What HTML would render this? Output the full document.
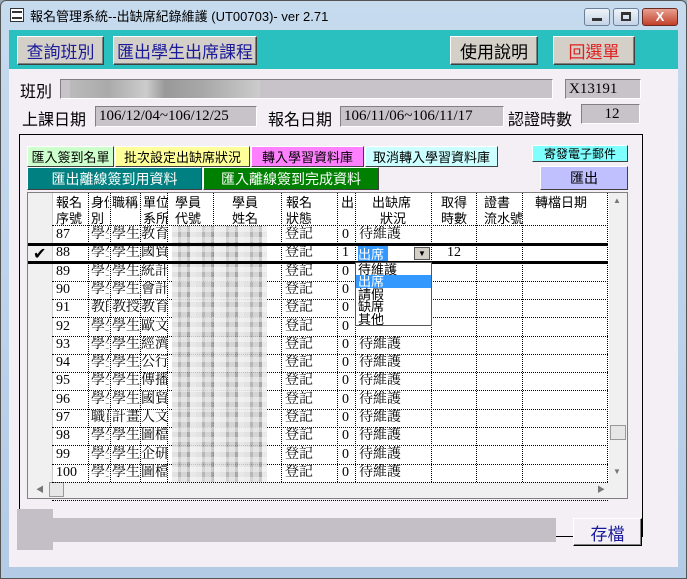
<!DOCTYPE html>
<html><head><meta charset="utf-8">
<style>
*{margin:0;padding:0;box-sizing:border-box}
body{width:687px;height:579px;overflow:hidden;background:#9ab;font-family:"Liberation Sans","Noto Sans CJK TC",sans-serif;position:relative}
.a{position:absolute}
.btn{position:absolute;background:#d4d0c8;border:1px solid;border-color:#fff #404040 #404040 #fff;box-shadow:inset -1px -1px 0 #808080;display:flex;align-items:center;justify-content:center;font-size:17px;font-family:"Noto Sans CJK TC",sans-serif;white-space:nowrap}
.box{position:absolute;background:#c8c3c8;border:1px solid;border-color:#808080 #fff #fff #808080;font-family:"Liberation Serif","Noto Serif CJK SC",serif;font-size:15px;display:flex;align-items:center;padding-left:3px;white-space:nowrap}
.lb{position:absolute;font-size:16px;font-family:"Noto Sans CJK TC",sans-serif;white-space:nowrap}
.sb{position:absolute;border:1px solid;border-color:#fff #404040 #404040 #fff;font-size:13px;display:flex;align-items:center;justify-content:center;font-family:"Noto Sans CJK TC",sans-serif;white-space:nowrap;overflow:hidden}
.cell{position:absolute;font-size:14px;font-family:"Liberation Serif","Noto Serif CJK SC",serif;white-space:nowrap;overflow:hidden;line-height:18px}
.vl{position:absolute;border-left:1px dotted #000;width:0}
.hl{position:absolute;border-top:1px dotted #000;height:0;left:52px;width:556px}
</style></head><body>
<div class="a" style="left:0;top:0;width:687px;height:579px;background:linear-gradient(#c7dbef,#b3cbe4);border:1px solid #555;border-radius:6px 6px 0 0"></div>
<div class="a" style="left:10px;top:8px;width:14px;height:14px;border:1px solid #333;background:#fff"></div>
<div class="a" style="left:12px;top:11px;width:10px;height:8px;border-top:2px solid #333;border-bottom:2px solid #333"></div>
<div class="a" style="left:30px;top:6px;font-size:13px;color:#000;font-family:'Liberation Sans','Noto Sans CJK TC',sans-serif">報名管理系統--出缺席紀錄維護 (UT00703)- ver 2.71</div>
<div class="a" style="left:584px;top:8px;width:26px;height:18px;border:1px solid #6a7f99;border-radius:3px;background:linear-gradient(#eef3f9,#c4d3e6)"></div>
<div class="a" style="left:592px;top:18px;width:10px;height:3px;background:#333"></div>
<div class="a" style="left:613px;top:8px;width:26px;height:18px;border:1px solid #6a7f99;border-radius:3px;background:linear-gradient(#eef3f9,#c4d3e6)"></div>
<div class="a" style="left:621px;top:12px;width:10px;height:9px;border:2px solid #333;border-top-width:3px"></div>
<div class="a" style="left:642px;top:8px;width:36px;height:18px;border:1px solid #6b2a20;border-radius:3px;background:linear-gradient(#e8a090,#c2402a);color:#fff;font-weight:bold;font-size:13px;text-align:center;line-height:16px">X</div>
<div class="a" style="left:9px;top:30px;width:669px;height:39px;background:#2ac0bf"></div>
<div class="btn" style="left:17px;top:36px;width:87px;height:29px;color:#1a1a9a">查詢班別</div>
<div class="btn" style="left:113px;top:36px;width:144px;height:29px;color:#1a1a9a">匯出學生出席課程</div>
<div class="btn" style="left:450px;top:36px;width:88px;height:29px;color:#000">使用說明</div>
<div class="btn" style="left:553px;top:36px;width:82px;height:29px;color:#e02020">回選單</div>
<div class="a" style="left:9px;top:69px;width:669px;height:498px;background:#f4eff5"></div>
<div class="lb" style="left:20px;top:78px">班別</div>
<div class="box" style="left:60px;top:79px;width:493px;height:20px"></div>
<div class="a" style="left:70px;top:80px;width:190px;height:18px;background:linear-gradient(90deg,#bbb 0,#aaa 20%,#ccc 40%,#999 50%,#a8a8a8 70%,#ccc 100%)"></div>
<div class="box" style="left:565px;top:79px;width:76px;height:20px">X13191</div>
<div class="lb" style="left:22px;top:106px">上課日期</div>
<div class="box" style="left:95px;top:106px;width:162px;height:21px">106/12/04~106/12/25</div>
<div class="lb" style="left:268px;top:106px">報名日期</div>
<div class="box" style="left:340px;top:106px;width:164px;height:21px">106/11/06~106/11/17</div>
<div class="lb" style="left:508px;top:106px">認證時數</div>
<div class="box" style="left:581px;top:104px;width:59px;height:20px;justify-content:center">12</div>
<div class="a" style="left:19px;top:134px;width:624px;height:403px;border:1px solid #000"></div>
<div class="sb" style="left:27px;top:146px;width:87px;height:21px;background:#ccffcc">匯入簽到名單</div>
<div class="sb" style="left:115px;top:146px;width:135px;height:21px;background:#ffff99">批次設定出缺席狀況</div>
<div class="sb" style="left:251px;top:146px;width:113px;height:21px;background:#ff80ff">轉入學習資料庫</div>
<div class="sb" style="left:365px;top:146px;width:133px;height:21px;background:#ccffff">取消轉入學習資料庫</div>
<div class="sb" style="left:532px;top:145px;width:96px;height:17px;background:#80ffff;font-size:12px">寄發電子郵件</div>
<div class="sb" style="left:27px;top:167px;width:175px;height:23px;background:#008080;color:#fff;font-size:14px">匯出離線簽到用資料</div>
<div class="sb" style="left:203px;top:167px;width:176px;height:23px;background:#008000;color:#fff;font-size:14px">匯入離線簽到完成資料</div>
<div class="sb" style="left:540px;top:166px;width:88px;height:24px;background:#c0c0ff;font-size:14px">匯出</div>
<div class="a" style="left:27px;top:192px;width:601px;height:307px;background:#fff;border:1px solid #808080;overflow:hidden"></div>
<div class="a" style="left:28px;top:193px;width:24px;height:289px;background:#f0f0f0"></div>
<div class="a" style="left:609px;top:193px;width:18px;height:289px;background:#f0f0f0"></div>
<div class="a" style="left:610px;top:425px;width:16px;height:15px;background:#e6e6e6;border:1px solid #999"></div>
<div class="a" style="left:613px;top:196px;font-size:8px;color:#777">▲</div>
<div class="a" style="left:613px;top:467px;font-size:8px;color:#777">▼</div>
<div class="a" style="left:28px;top:482px;width:599px;height:16px;background:#f0f0f0"></div>
<div class="a" style="left:49px;top:482px;width:15px;height:15px;background:#e6e6e6;border:1px solid #999"></div>
<div class="a" style="left:36px;top:484px;font-size:8px;color:#777">◀</div>
<div class="a" style="left:597px;top:484px;font-size:8px;color:#777">▶</div>
<div class="cell" style="left:56px;top:194px;line-height:16px;font-family:'Noto Sans CJK TC';font-size:13px">報名<br>序號</div>
<div class="cell" style="left:91px;top:194px;width:18px;line-height:16px;font-family:'Noto Sans CJK TC';font-size:13px">身份<br>別</div>
<div class="cell" style="left:112px;top:194px;width:28px;line-height:16px;font-family:'Noto Sans CJK TC';font-size:13px">職稱</div>
<div class="cell" style="left:143px;top:194px;width:25px;line-height:16px;font-family:'Noto Sans CJK TC';font-size:13px">單位<br>系所</div>
<div class="cell" style="left:175px;top:194px;line-height:16px;font-family:'Noto Sans CJK TC';font-size:13px">學員<br>代號</div>
<div class="cell" style="left:232px;top:194px;line-height:16px;font-family:'Noto Sans CJK TC';font-size:13px">學員<br>姓名</div>
<div class="cell" style="left:286px;top:194px;line-height:16px;font-family:'Noto Sans CJK TC';font-size:13px">報名<br>狀態</div>
<div class="cell" style="left:341px;top:194px;line-height:16px;font-family:'Noto Sans CJK TC';font-size:13px">出</div>
<div class="cell" style="left:372px;top:194px;line-height:16px;text-align:center;font-family:'Noto Sans CJK TC';font-size:13px">出缺席<br>&nbsp;狀況</div>
<div class="cell" style="left:441px;top:194px;line-height:16px;font-family:'Noto Sans CJK TC';font-size:13px">取得<br>時數</div>
<div class="cell" style="left:484px;top:194px;line-height:16px;font-family:'Noto Sans CJK TC';font-size:13px">證書<br>流水號</div>
<div class="cell" style="left:535px;top:194px;line-height:16px;font-family:'Noto Sans CJK TC';font-size:13px">轉檔日期</div>
<div class="vl" style="left:52px;top:193px;height:289px;border-left:1px solid #ccc"></div>
<div class="vl" style="left:88px;top:193px;height:289px"></div>
<div class="vl" style="left:110px;top:193px;height:289px"></div>
<div class="vl" style="left:140px;top:193px;height:289px"></div>
<div class="vl" style="left:167px;top:193px;height:289px"></div>
<div class="vl" style="left:213px;top:193px;height:289px"></div>
<div class="vl" style="left:281px;top:193px;height:289px"></div>
<div class="vl" style="left:337px;top:193px;height:289px"></div>
<div class="vl" style="left:355px;top:193px;height:289px"></div>
<div class="vl" style="left:431px;top:193px;height:289px"></div>
<div class="vl" style="left:476px;top:193px;height:289px"></div>
<div class="vl" style="left:522px;top:193px;height:289px"></div>
<div class="vl" style="left:607px;top:193px;height:289px"></div>
<div class="hl" style="top:225px"></div>
<div id="rows"></div>
<div class="a" style="left:172px;top:226px;width:95px;height:256px;background:repeating-linear-gradient(90deg,#ddd 0 6px,#aaa 6px 9px,#ccc 9px 15px,#999 15px 18px,#e4e4e4 18px 24px);opacity:.85"></div>
<div class="a" style="left:172px;top:226px;width:95px;height:256px;background:repeating-linear-gradient(0deg,rgba(255,255,255,.4) 0 5px,rgba(0,0,0,0) 5px 10px)"></div>
<div class="a" style="left:28px;top:243px;width:580px;height:3px;background:#000"></div>
<div class="a" style="left:28px;top:261px;width:580px;height:3px;background:#000"></div>
<div class="a" style="left:33px;top:244px;font-size:16px">✔</div>
<div class="a" style="left:357px;top:246px;width:74px;height:15px;background:#fff"></div>
<div class="a" style="left:358px;top:246px;width:30px;height:15px;background:#3399ff;color:#fff;font-size:13px;line-height:15px;font-family:'Noto Sans CJK TC'">出席</div>
<div class="a" style="left:414px;top:247px;width:16px;height:13px;background:#d4d0c8;border:1px solid #555;font-size:8px;text-align:center;line-height:12px">▼</div>
<div class="a" style="left:355px;top:262px;width:77px;height:64px;background:#fff;border:1px solid #555;font-family:'Noto Sans CJK TC';font-size:13px;line-height:12.4px">
<div style="padding-left:2px">待維護</div><div style="padding-left:2px;background:#3399ff;color:#fff">出席</div><div style="padding-left:2px">請假</div><div style="padding-left:2px">缺席</div><div style="padding-left:2px">其他</div></div>
<div class="a" style="left:17px;top:509px;width:36px;height:41px;background:#c4bec6"></div>
<div class="a" style="left:17px;top:518px;width:539px;height:24px;background:#c4bec6"></div>
<div class="btn" style="left:573px;top:518px;width:69px;height:28px;background:#f4eff5;color:#1a1a9a;border-color:#fff #000 #000 #fff">存檔</div>
<script>
var d=[["87","學生","學生","教育","0","待維護"],["88","學生","學生","國貿","1",""],["89","學生","學生","統計","0",""],["90","學生","學生","會計","0",""],["91","教師","教授","教育","0",""],["92","學生","學生","歐文","0",""],["93","學生","學生","經濟","0","待維護"],["94","學生","學生","公行","0","待維護"],["95","學生","學生","傳播","0","待維護"],["96","學生","學生","國貿","0","待維護"],["97","職員","計畫","人文","0","待維護"],["98","學生","學生","圖檔","0","待維護"],["99","學生","學生","企研","0","待維護"],["100","學生","學生","圖檔","0","待維護"]];
var h="";for(var i=0;i<d.length;i++){var y=226+i*18.3;var r=d[i];
h+='<div class="hl" style="top:'+(y+18)+'px"></div>';
h+='<div class="cell" style="left:56px;top:'+y+'px">'+r[0]+'</div>';
h+='<div class="cell" style="left:91px;top:'+y+'px;width:18px">'+r[1]+'</div>';
h+='<div class="cell" style="left:112px;top:'+y+'px;width:28px">'+r[2]+'</div>';
h+='<div class="cell" style="left:141px;top:'+y+'px;width:26px">'+r[3]+'</div>';
h+='<div class="cell" style="left:285px;top:'+y+'px">登記</div>';
h+='<div class="cell" style="left:342px;top:'+y+'px">'+r[4]+'</div>';
if(r[5])h+='<div class="cell" style="left:359px;top:'+y+'px">'+r[5]+'</div>';
if(i==1)h+='<div class="cell" style="left:447px;top:'+y+'px">12</div>';}
h+='<div class="hl" style="top:'+(226+14*18.3+18)+'px"></div>';
document.getElementById("rows").outerHTML=h;
</script>
</body></html>
